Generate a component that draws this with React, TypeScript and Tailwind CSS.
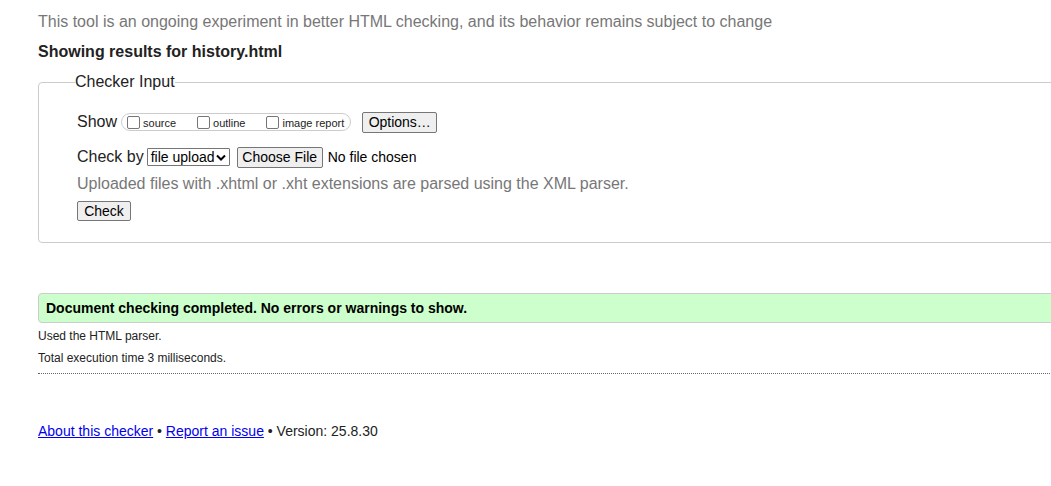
export default function App() {
  return (
    <div className="w-[1051px] h-[486px] overflow-hidden bg-white font-['Liberation_Sans',Arial,sans-serif] text-[#222]">
      <div className="w-[1100px] pl-[38px]">
        {/* intro */}
        <p className="pt-[13px] text-[16px] leading-[18px] text-[#777]">
          This tool is an ongoing experiment in better HTML checking, and its behavior remains subject to change
        </p>
        <p className="mt-[12px] text-[16px] leading-[18px] font-bold">Showing results for history.html</p>

        {/* checker input */}
        <fieldset className="mt-[12px] border border-[#ccc] rounded-[4px]">
          <legend className="ml-[36px] text-[16px] leading-[18px]">Checker Input</legend>
          <div className="pl-[38px] pt-[20px] pb-[19px]">
            <div className="flex items-center h-[22px]">
              <span className="text-[16px] leading-[18px]">Show</span>
              <div className="ml-[4px] flex items-center h-[18px] border border-[#ccc] rounded-[9px] pl-[5px] pr-[6px] gap-[21px] text-[11px]">
                <label className="flex items-center gap-[3px]">
                  <input type="checkbox" className="appearance-none w-[13px] h-[13px] border border-[#767676] rounded-[2px] bg-white" />
                  <span className="mt-[3px]">source</span>
                </label>
                <label className="flex items-center gap-[3px]">
                  <input type="checkbox" className="appearance-none w-[13px] h-[13px] border border-[#767676] rounded-[2px] bg-white" />
                  <span className="mt-[3px]">outline</span>
                </label>
                <label className="flex items-center gap-[3px]">
                  <input type="checkbox" className="appearance-none w-[13px] h-[13px] border border-[#767676] rounded-[2px] bg-white" />
                  <span className="mt-[3px]">image report</span>
                </label>
              </div>
              <button className="ml-[11px] h-[21px] w-[75px] border border-[#767676] rounded-[2px] bg-[#efefef] text-[14px] leading-[16px] text-black">
                Options…
              </button>
            </div>

            <div className="mt-[13px] flex items-center h-[22px]">
              <span className="text-[16px] leading-[18px]">Check by</span>
              <div className="ml-[3px] flex items-center justify-between w-[83px] h-[18px] border border-[#767676] rounded-[1px] pl-[3px] pr-[3px] text-[14px] leading-[16px] text-black">
                <span>file upload</span>
                <svg width="10" height="7" viewBox="0 0 10 7" fill="none" stroke="#000" strokeWidth="2">
                  <path d="M1 1.5l4 4 4-4" />
                </svg>
              </div>
              <button className="ml-[7px] h-[21px] w-[86px] border border-[#767676] rounded-[2px] bg-[#efefef] text-[14px] leading-[16px] text-black">
                Choose File
              </button>
              <span className="ml-[5px] text-[14px] leading-[16px] text-black">No file chosen</span>
            </div>

            <p className="mt-[7px] text-[16px] leading-[18px] text-[#777]">
              Uploaded files with .xhtml or .xht extensions are parsed using the XML parser.
            </p>

            <button className="mt-[8px] h-[20px] w-[54px] border border-[#767676] rounded-[2px] bg-[#efefef] text-[14px] leading-[16px] text-black">
              Check
            </button>
          </div>
        </fieldset>

        {/* result */}
        <div className="mt-[50px] h-[30px] flex items-center border border-[#ccc] rounded-l-[4px] bg-[#ccffcc] pl-[7px] text-[14px] font-bold text-black">
          Document checking completed. No errors or warnings to show.
        </div>
        <p className="mt-[6px] text-[12px] leading-[14px]">Used the HTML parser.</p>
        <p className="mt-[8px] text-[12px] leading-[14px]">Total execution time 3 milliseconds.</p>
        <div className="mt-[8px] border-b border-dotted border-[#666]" />

        {/* footer */}
        <p className="mt-[49px] text-[14px] leading-[16px]">
          <a href="#" className="text-[#00e] underline">About this checker</a>
          {' • '}
          <a href="#" className="text-[#00e] underline">Report an issue</a>
          {' • Version: 25.8.30'}
        </p>
      </div>
    </div>
  )
}
